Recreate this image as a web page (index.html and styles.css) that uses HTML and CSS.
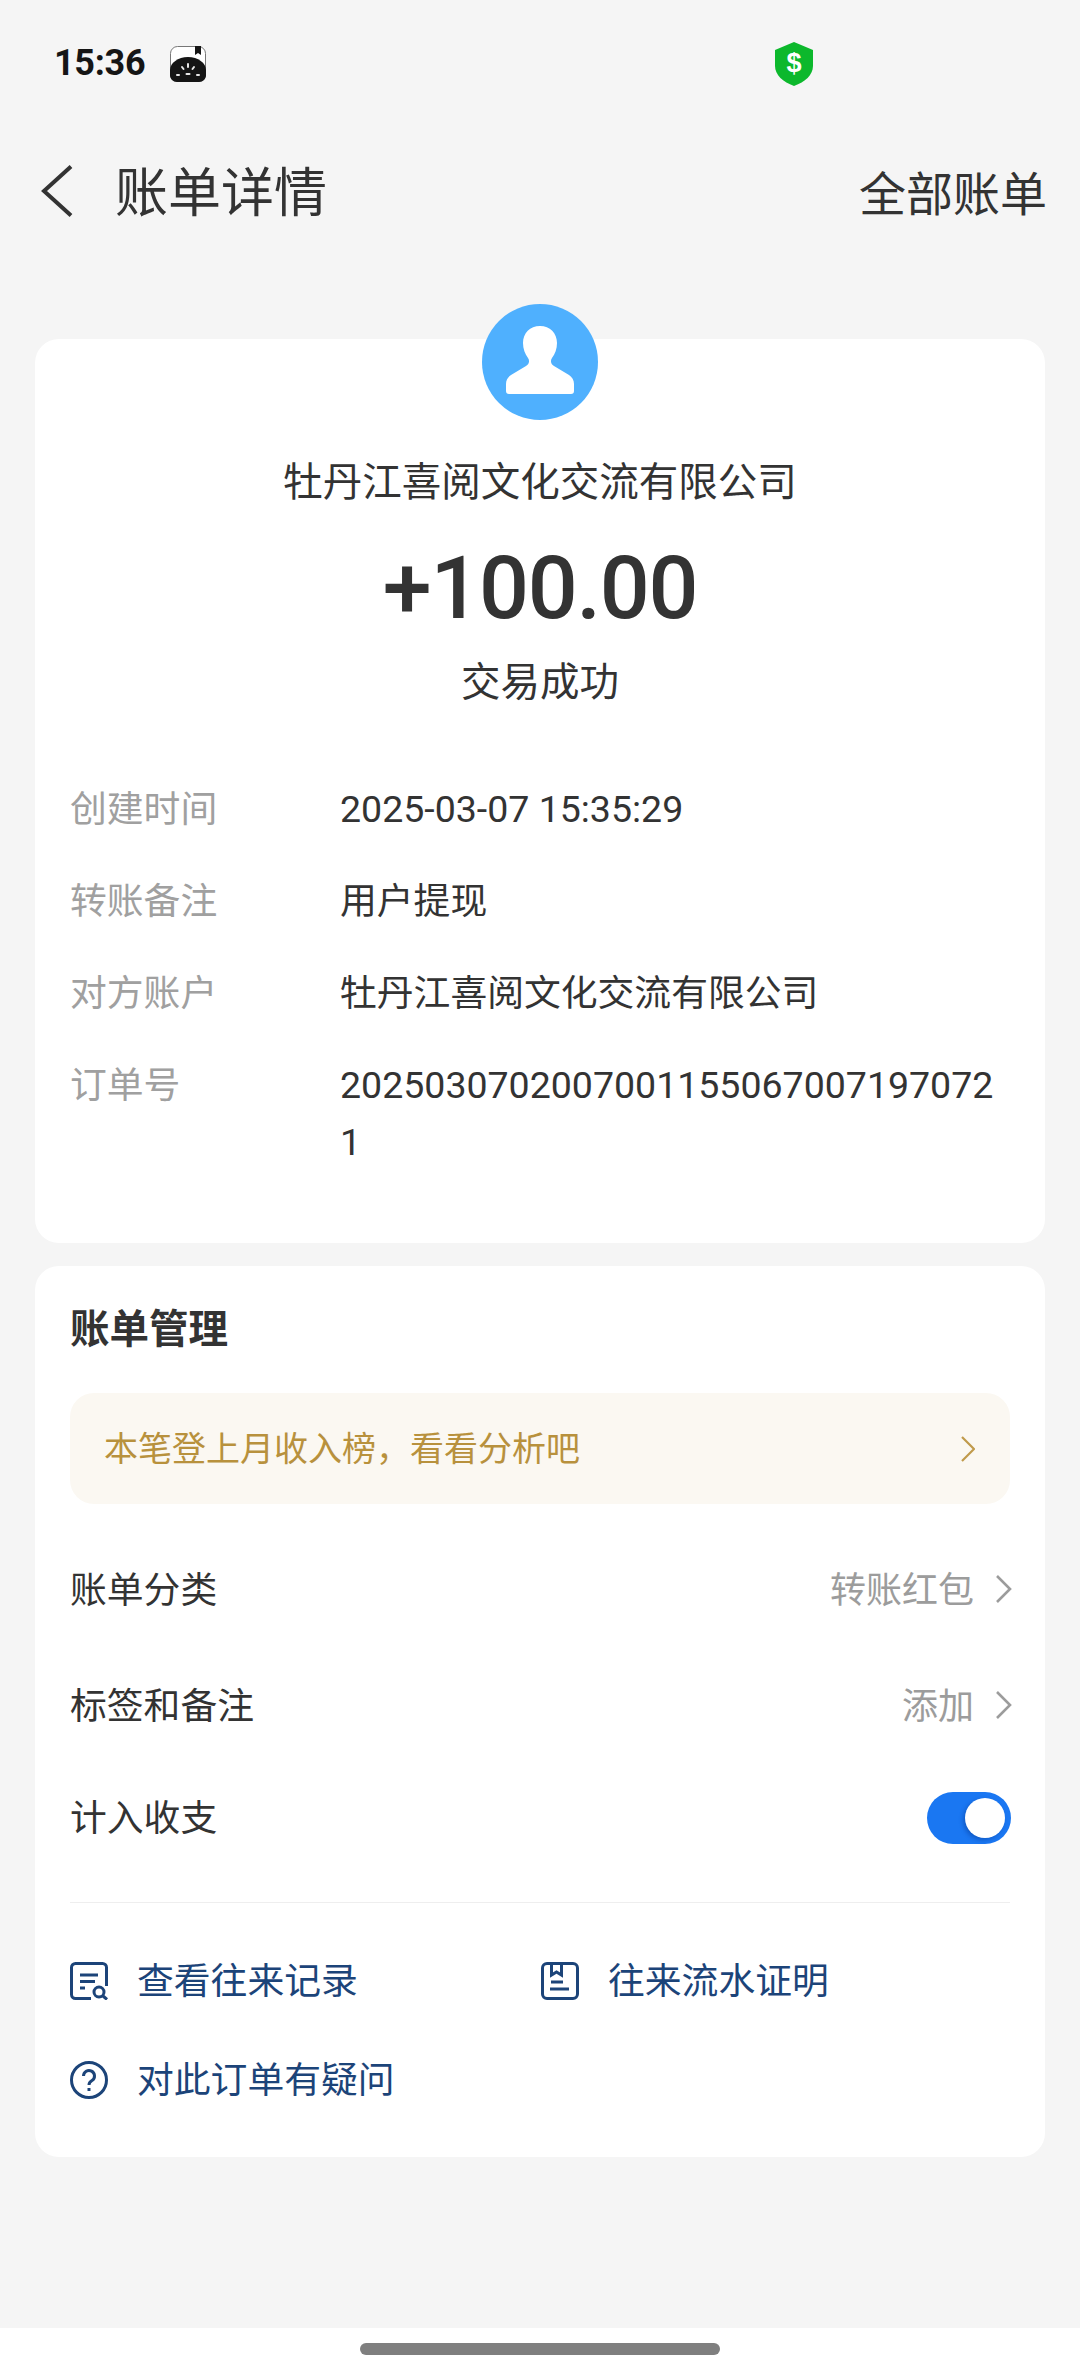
FILE: index.html
```html
<!DOCTYPE html>
<html lang="zh-CN">
    <head>
        <meta charset="UTF-8" />
        <meta name="viewport" content="width=device-width, initial-scale=1.0" />
        <title>账单详情</title>
        <link rel="stylesheet" href="styles.css">
    </head>
    <body>
        <div class="page">
            <div class="statusbar">
                <span class="time">15:36</span>
                <svg class="notify-icon" width="36" height="36" viewBox="0 0 36 36">
                    <rect x="0.500" y="0.500" width="35" height="35" rx="7" fill="#fff" stroke="#777" stroke-width="1"/>
                    <path d="M25 0h6v9l-3-2-3 2z" fill="#151515"/>
                    <path d="M0 24c0-7 8-13 18-13s18 6 18 13v5c0 4-3 7-7 7H7c-4 0-7-3-7-7z" fill="#151515"/>
                    <path d="M18 18v3M12 21l1.500 2M24 21l-1.500 2M7 29h2M27 29h2M16.500 28h3" stroke="#e8e8e8" stroke-width="2" stroke-linecap="round"/>
                </svg>
                <svg class="shield-icon" width="40" height="44" viewBox="0 0 40 44">
                    <path d="M20 0l19 8v16c0 9-8 16-19 20C9 40 1 33 1 24V8z" fill="#0cb82c"/>
                    <text x="20" y="30" class="shield-text">$</text>
                </svg>
            </div>

            <header class="navbar">
                <svg class="back-icon" width="32" height="52" viewBox="0 0 32 52">
                    <path d="M30 1.500L3 26l27 24.500" fill="none" stroke="#333" stroke-width="4"/>
                </svg>
                <h1 class="nav-title">账单详情</h1>
                <span class="nav-action">全部账单</span>
            </header>

            <main class="content">
                <section class="card card-detail">
                    <svg class="avatar" width="116" height="116" viewBox="0 0 116 116">
                        <circle cx="58" cy="58" r="58" fill="#4fb0fe"/>
                        <path d="M58 22c-10 0-17 7-17 17 0 6 2 11 5 15 2 3 1 6-2 8L29 71c-3 2-5 5-5 9v7c0 2 1 3 3 3h62c2 0 3-1 3-3v-7c0-4-2-7-5-9l-15-9c-3-2-4-5-2-8 3-4 5-9 5-15 0-10-7-17-17-17z" fill="#fff"/>
                    </svg>
                    <div class="payer">牡丹江喜阅文化交流有限公司</div>
                    <div class="amount">+100.00</div>
                    <div class="trade-status">交易成功</div>
                    <dl class="info">
                        <div class="info-row"><dt>创建时间</dt><dd class="info-num">2025-03-07 15:35:29</dd></div>
                        <div class="info-row"><dt>转账备注</dt><dd>用户提现</dd></div>
                        <div class="info-row"><dt>对方账户</dt><dd>牡丹江喜阅文化交流有限公司</dd></div>
                        <div class="info-row"><dt>订单号</dt><dd class="info-num">20250307020070011550670071970721</dd></div>
                    </dl>
                </section>

                <section class="card card-manage">
                    <h2 class="manage-title">账单管理</h2>
                    <div class="banner">
                        <span>本笔登上月收入榜，看看分析吧</span>
                        <svg width="14" height="26" viewBox="0 0 14 26">
                            <path d="M1 1l12 12L1 25" fill="none" stroke="#c09a4c" stroke-width="2.200"/>
                        </svg>
                    </div>
                    <div class="row row-tall">
                        <span>账单分类</span>
                        <span class="row-value">转账红包
                            <svg width="16" height="28" viewBox="0 0 16 28">
                                <path d="M1 1l13 13L1 27" fill="none" stroke="#9c9c9c" stroke-width="2.600"/>
                            </svg>
                        </span>
                    </div>
                    <div class="row row-tall">
                        <span>标签和备注</span>
                        <span class="row-value">添加
                            <svg width="16" height="28" viewBox="0 0 16 28">
                                <path d="M1 1l13 13L1 27" fill="none" stroke="#9c9c9c" stroke-width="2.600"/>
                            </svg>
                        </span>
                    </div>
                    <div class="row row-switch">
                        <span>计入收支</span>
                        <span class="toggle"><span class="toggle-knob"></span></span>
                    </div>
                    <div class="links">
                        <a class="link">
                            <svg width="38" height="38" viewBox="0 0 38 38" fill="none" stroke="#1c4479" stroke-width="3">
                                <path d="M36.500 24V5.500a4 4 0 0 0-4-4h-27a4 4 0 0 0-4 4v27a4 4 0 0 0 4 4H21"/>
                                <path d="M10 13h18M10 19.500h15M10 26h5"/>
                                <circle cx="29" cy="30" r="5"/>
                                <path d="M33 34l4 3.500"/>
                            </svg>
                            查看往来记录
                        </a>
                        <a class="link">
                            <svg width="38" height="38" viewBox="0 0 38 38" fill="none" stroke="#1c4479" stroke-width="3">
                                <rect x="1.500" y="1.500" width="35" height="35" rx="4.500"/>
                                <path d="M10.500 1v12l5-3 5 3V1M10 20h12M9 27h19"/>
                            </svg>
                            往来流水证明
                        </a>
                        <a class="link">
                            <svg width="38" height="38" viewBox="0 0 38 38" fill="none" stroke="#1c4479" stroke-width="3">
                                <circle cx="19" cy="19" r="17.500"/>
                                <path d="M13.500 15a5.500 5.500 0 1 1 8.500 4.600c-2 1.300-3 2.200-3 4.400"/>
                                <path d="M19 27v3"/>
                            </svg>
                            对此订单有疑问
                        </a>
                    </div>
                </section>
            </main>

            <footer class="homebar"><span class="home-pill"></span></footer>
        </div>
    </body>
</html>
```
FILE: styles.css
```css
* {
    box-sizing: border-box;
}

html,
body {
    margin: 0;
    padding: 0;
}

body {
    background-color: #f5f5f5;
    font-family: Roboto, "Noto Sans CJK SC", sans-serif;
    color: #333;
}

.page {
    width: 1080px;
    height: 2376px;
    display: flex;
    flex-direction: column;
    overflow: hidden;
}

.statusbar {
    height: 126px;
    padding-left: 54px;
    display: flex;
    align-items: center;
}

.time {
    width: 116px;
    font-size: 36px;
    font-weight: 700;
    letter-spacing: -0.300px;
    color: #151515;
}

.notify-icon {
    margin-top: 2px;
}

.shield-icon {
    margin-left: 568px;
    margin-top: 2px;
}

.shield-text {
    font-family: "Liberation Sans", sans-serif;
    font-size: 27px;
    font-weight: 700;
    fill: #fff;
    text-anchor: middle;
}

.navbar {
    height: 130px;
    padding: 0 33px 0 41px;
    display: flex;
    align-items: center;
}

.back-icon {
    margin-right: 42px;
}

.nav-title {
    margin: 0 0 4px;
    flex: 1;
    font-size: 53px;
    font-weight: 400;
    color: #333;
}

.nav-action {
    margin-bottom: 2px;
    font-size: 47px;
    color: #333;
}

.content {
    padding: 83px 35px 0;
    display: flex;
    flex-direction: column;
    gap: 23px;
}

.card {
    background-color: #fff;
    border-radius: 24px;
}

.card-detail {
    height: 904px;
    padding: 0 35px;
    display: flex;
    flex-direction: column;
    align-items: center;
}

.avatar {
    flex: none;
    margin-top: -35px;
}

.payer {
    margin-top: 33px;
    font-size: 39.500px;
    line-height: 60px;
}

.amount {
    margin-top: 20px;
    font-size: 88px;
    font-weight: 500;
    letter-spacing: -1.300px;
    line-height: 110px;
}

.trade-status {
    margin-top: 12px;
    font-size: 39.500px;
    line-height: 56px;
}

.info {
    width: 100%;
    margin: 70px 0 0;
    display: flex;
    flex-direction: column;
    gap: 35px;
    font-size: 36.800px;
    line-height: 57px;
}

.info-row {
    display: flex;
}

.info-row dt {
    flex: none;
    width: 270px;
    color: #a0a0a0;
}

.info-row dd {
    margin: 0;
    width: 665px;
    word-break: break-all;
    color: #333;
}

.info-row .info-num {
    font-size: 37.500px;
}

.card-manage {
    height: 891px;
    padding: 34px 35px 0;
}

.manage-title {
    margin: 0;
    font-size: 39.500px;
    font-weight: 700;
    line-height: 60px;
    color: #333;
}

.banner {
    height: 111px;
    margin-top: 33px;
    padding: 0 35px 5px 34px;
    display: flex;
    align-items: center;
    justify-content: space-between;
    background-color: #fbf8f2;
    border-radius: 24px;
    font-size: 34px;
    color: #b8913d;
}

.banner svg {
    margin-top: 5px;
}

.row {
    height: 112px;
    padding-bottom: 5px;
    display: flex;
    align-items: center;
    justify-content: space-between;
    font-size: 36.800px;
    color: #333;
}

.row-tall {
    height: 116px;
}

.row-switch {
    padding-bottom: 9px;
}

.banner + .row {
    margin-top: 27px;
}

.row-value {
    display: flex;
    align-items: center;
    gap: 22px;
    margin-right: -2px;
    font-size: 36px;
    color: #9c9c9c;
}

.row-value svg {
    margin-top: 5px;
}

.toggle {
    width: 84px;
    height: 52px;
    margin-top: 7px;
    margin-right: -1px;
    padding: 6px;
    display: flex;
    justify-content: flex-end;
    background-color: #1a77f2;
    border-radius: 26px;
}

.toggle-knob {
    width: 40px;
    height: 40px;
    background-color: #fff;
    border-radius: 50%;
    box-shadow: -2px 2px 4px rgba(0, 40, 120, 0.35);
}

.links {
    margin-top: 27px;
    padding-top: 28px;
    border-top: 1px solid #eeeeee;
    display: grid;
    grid-template-columns: 471px 1fr;
    grid-auto-rows: 99px;
}

.link {
    padding-bottom: 5px;
    display: flex;
    align-items: center;
    gap: 29px;
    font-size: 36.800px;
    color: #1c4479;
}

.link svg {
    margin-top: 5px;
}

.homebar {
    margin-top: auto;
    height: 48px;
    padding-top: 15px;
    display: flex;
    justify-content: center;
    background-color: #fff;
}

.home-pill {
    width: 360px;
    height: 12px;
    background-color: #7f7f7f;
    border-radius: 6px;
}
```
